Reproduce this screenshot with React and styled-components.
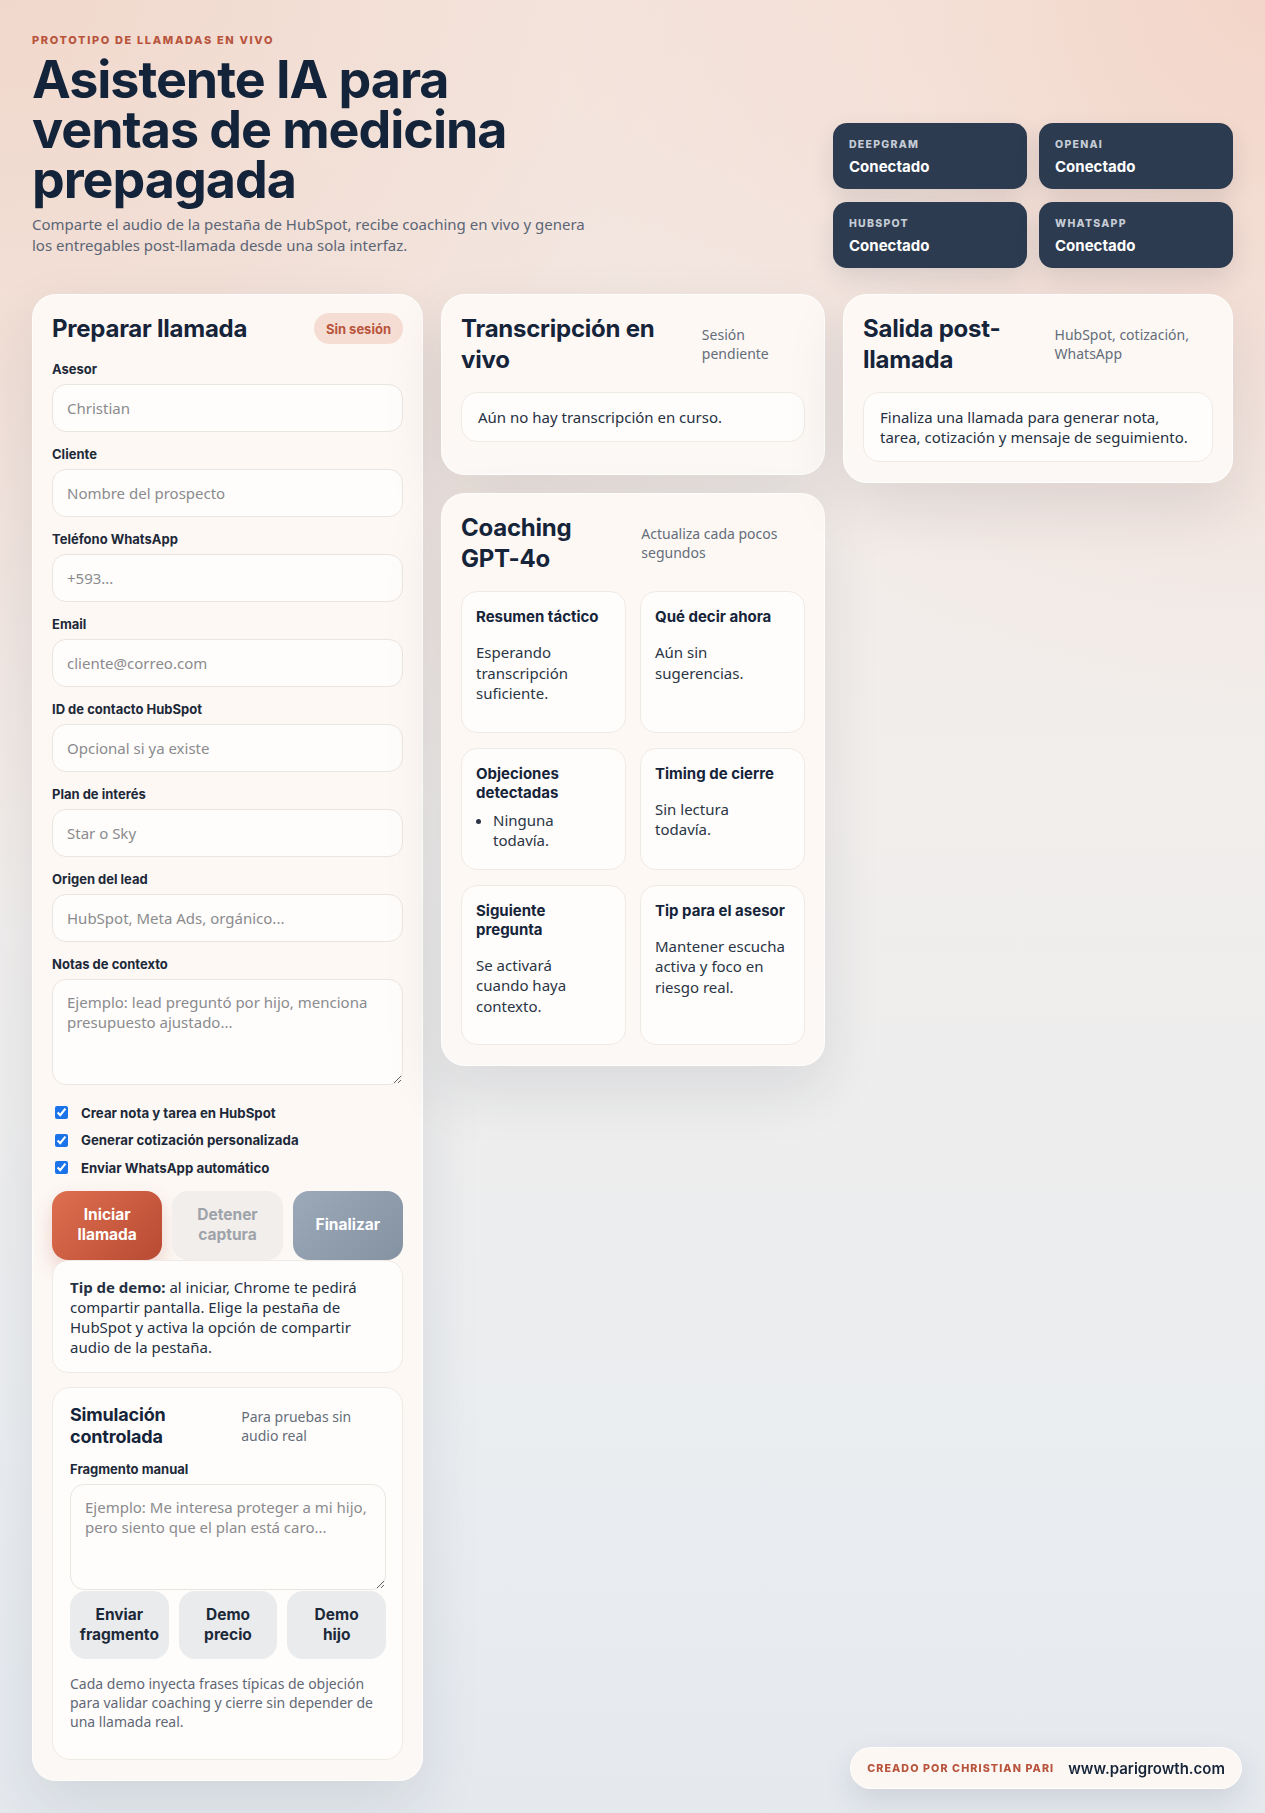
import React from "react";
import styled, { createGlobalStyle } from "styled-components";

const headingFont = `"Inter", "Liberation Sans", sans-serif`;
const bodyFont = `"Noto Sans", "Liberation Sans", sans-serif`;

const GlobalStyle = createGlobalStyle`
  * {
    box-sizing: border-box;
  }
  html,
  body {
    margin: 0;
    min-height: 100%;
  }
  body {
    font-family: ${bodyFont};
    color: #1d2939;
    background:
      radial-gradient(circle at 0% 0%, rgba(238, 200, 182, 0.55), transparent 42%),
      radial-gradient(circle at 100% 0%, rgba(242, 204, 188, 0.7), transparent 32%),
      linear-gradient(180deg, #f5ebe6 0%, #f1eeec 45%, #eaedf0 80%, #e5e9ee 100%);
    min-height: 1813px;
  }
`;

const Page = styled.main`
  padding: 33px 32px 40px;
`;

const Hero = styled.header`
  display: flex;
  justify-content: space-between;
  align-items: flex-end;
  gap: 24px;
  margin-bottom: 26px;
`;

const HeroText = styled.div`
  max-width: 565px;
  padding-bottom: 12px;
`;

const Eyebrow = styled.p`
  margin: 0 0 8px;
  font-family: ${headingFont};
  font-size: 11px;
  line-height: 14px;
  font-weight: 800;
  letter-spacing: 0.15em;
  text-transform: uppercase;
  color: #b8543c;
`;

const Title = styled.h1`
  margin: 0 0 9px;
  font-family: ${headingFont};
  font-size: 52px;
  line-height: 50px;
  font-weight: 700;
  letter-spacing: -0.02em;
  color: #13233a;
`;

const Lead = styled.p`
  margin: 0;
  font-size: 15px;
  line-height: 21px;
  color: #5b6575;
`;

const StatusGrid = styled.div`
  display: grid;
  grid-template-columns: repeat(2, 194px);
  gap: 13px 12px;
`;

const StatusCard = styled.div`
  background: #2c3b4f;
  border-radius: 14px;
  padding: 15px 16px 12px;
  box-shadow: 0 10px 24px rgba(30, 41, 59, 0.12);
`;

const StatusLabel = styled.div`
  font-family: ${headingFont};
  font-size: 10.5px;
  line-height: 14px;
  font-weight: 800;
  letter-spacing: 0.12em;
  color: #c5ccd6;
`;

const StatusValue = styled.div`
  margin-top: 5px;
  font-family: ${headingFont};
  font-size: 15px;
  line-height: 20px;
  font-weight: 700;
  color: #ffffff;
`;

const Board = styled.div`
  display: grid;
  grid-template-columns: 391px 1fr 390px;
  gap: 18px;
  align-items: start;
`;

const Stack = styled.div`
  display: flex;
  flex-direction: column;
  gap: 18px;
`;

const Card = styled.section`
  background: linear-gradient(180deg, #fdf8f4 0%, #fcf8f5 100%);
  border: 1px solid rgba(255, 255, 255, 0.8);
  border-radius: 24px;
  padding: 18px 19px 20px;
  box-shadow: 0 24px 60px rgba(31, 41, 55, 0.1);
`;

const CardHeader = styled.div`
  display: flex;
  justify-content: space-between;
  align-items: center;
  gap: 16px;
  margin-bottom: ${({ $tight }) => ($tight ? "13px" : "17px")};
`;

const CardTitle = styled.h2`
  margin: 0;
  font-family: ${headingFont};
  font-size: ${({ $small }) => ($small ? "18px" : "24px")};
  line-height: ${({ $small }) => ($small ? "22px" : "31px")};
  font-weight: 700;
  letter-spacing: -0.01em;
  color: #16243a;
`;

const Aside = styled.span`
  font-size: 14px;
  line-height: 19px;
  color: #646d7a;
`;

const Pill = styled.span`
  flex-shrink: 0;
  display: inline-flex;
  align-items: center;
  height: 31px;
  padding: 0 12px;
  border-radius: 999px;
  background: #f6ddd3;
  font-family: ${headingFont};
  font-size: 13px;
  font-weight: 700;
  color: #b8543c;
`;

const Form = styled.div`
  display: flex;
  flex-direction: column;
  gap: 14px;
`;

const Field = styled.label`
  display: flex;
  flex-direction: column;
  gap: 6px;
`;

const FieldLabel = styled.span`
  font-family: ${headingFont};
  font-size: 13px;
  line-height: 17px;
  font-weight: 700;
  color: #1d2939;
`;

const Input = styled.input`
  height: 48px;
  width: 100%;
  padding: 0 14px;
  border: 1px solid #ebe5e0;
  border-radius: 14px;
  background: #fffdfb;
  font-family: ${bodyFont};
  font-size: 15px;
  color: #1d2939;
  outline: none;

  &::placeholder {
    color: #8a8b8e;
  }
`;

const TextArea = styled.textarea`
  display: block;
  width: 100%;
  height: 106px;
  padding: 12px 14px;
  border: 1px solid #ebe5e0;
  border-radius: 14px;
  background: #fffdfb;
  font-family: ${bodyFont};
  font-size: 15px;
  line-height: 20px;
  color: #1d2939;
  outline: none;

  &::placeholder {
    color: #8a8b8e;
  }
`;

const CheckList = styled.div`
  display: flex;
  flex-direction: column;
  gap: 10px;
  padding: 5px 0 0 3px;
`;

const CheckRow = styled.label`
  display: flex;
  align-items: center;
  gap: 13px;
  height: 17.5px;
  font-family: ${headingFont};
  font-size: 13.25px;
  font-weight: 700;
  color: #1d2939;

  input {
    margin: 0;
    width: 13px;
    height: 13px;
    accent-color: #1a73e8;
  }
`;

const ActionGroup = styled.div`
  display: flex;
  flex-direction: column;
`;

const Actions = styled.div`
  display: grid;
  grid-template-columns: repeat(3, 1fr);
  gap: 10px;
`;

const tones = {
  primary: `
    background: linear-gradient(135deg, #de6f4f 0%, #b84a33 100%);
    color: #ffffff;
    box-shadow: 0 10px 20px rgba(184, 74, 51, 0.22);
  `,
  muted: `
    background: #f2eeeb;
    color: #9ea3aa;
  `,
  slate: `
    background: linear-gradient(135deg, #9ba9b9 0%, #8592a2 100%);
    color: #ffffff;
  `,
  soft: `
    background: #e9ebec;
    color: #1d2939;
  `,
};

const Button = styled.button`
  min-height: ${({ $h }) => $h || "69px"};
  padding: 12px 6px;
  border: none;
  border-radius: 16px;
  font-family: ${headingFont};
  font-size: 15.5px;
  line-height: 20px;
  font-weight: 700;
  ${({ $tone }) => tones[$tone]}
`;

const Box = styled.div`
  background: #fffdfb;
  border: 1px solid #f0eae5;
  border-radius: ${({ $r }) => $r || "16px"};
  padding: ${({ $pad }) => $pad || "14px 16px"};
  font-size: 15px;
  line-height: 20px;
  color: #253143;
`;

const Feed = styled.div`
  min-height: 62px;
`;

const TileGrid = styled.div`
  display: grid;
  grid-template-columns: 1fr 1fr;
  gap: 15px 14px;
`;

const Tile = styled.div`
  background: #fffdfb;
  border: 1px solid #f0eae5;
  border-radius: 16px;
  padding: 15px 17px 16px 14px;
`;

const TileTitle = styled.h3`
  margin: 0 0 8px;
  font-family: ${headingFont};
  font-size: 15px;
  line-height: 19px;
  font-weight: 700;
  color: #16243a;
`;

const TileText = styled.p`
  margin: 16px 0 12px;
  font-size: 15px;
  line-height: 20.5px;
  color: #2a3545;
`;

const TileList = styled.ul`
  margin: 8px 0 2px;
  padding-left: 17px;
  font-size: 15px;
  line-height: 20.5px;
  color: #2a3545;
`;

const SimButtons = styled.div`
  display: grid;
  grid-template-columns: repeat(3, 1fr);
  gap: 10px;
  margin-top: 1px;
`;

const Note = styled.p`
  margin: 15px 0 12px;
  font-size: 14px;
  line-height: 19px;
  color: #5f6876;
`;

const Credit = styled.footer`
  position: fixed;
  right: 23px;
  bottom: 24px;
  display: flex;
  align-items: center;
  gap: 14px;
  height: 42px;
  padding: 0 16px;
  border-radius: 999px;
  background: #fcf7f3;
  border: 1px solid rgba(255, 255, 255, 0.8);
  box-shadow: 0 12px 30px rgba(31, 41, 55, 0.12);
`;

const CreditBy = styled.span`
  font-family: ${headingFont};
  font-size: 10.75px;
  font-weight: 800;
  letter-spacing: 0.1em;
  color: #b8543c;
`;

const CreditLink = styled.span`
  font-family: ${headingFont};
  font-size: 15px;
  font-weight: 600;
  color: #16243a;
`;

const statuses = ["Deepgram", "OpenAI", "HubSpot", "WhatsApp"];

const fields = [
  { label: "Asesor", placeholder: "Christian" },
  { label: "Cliente", placeholder: "Nombre del prospecto" },
  { label: "Teléfono WhatsApp", placeholder: "+593..." },
  { label: "Email", placeholder: "cliente@correo.com" },
  { label: "ID de contacto HubSpot", placeholder: "Opcional si ya existe" },
  { label: "Plan de interés", placeholder: "Star o Sky" },
  { label: "Origen del lead", placeholder: "HubSpot, Meta Ads, orgánico..." },
];

const options = [
  "Crear nota y tarea en HubSpot",
  "Generar cotización personalizada",
  "Enviar WhatsApp automático",
];

const tiles = [
  { title: "Resumen táctico", text: "Esperando transcripción suficiente." },
  { title: "Qué decir ahora", text: "Aún sin sugerencias." },
  { title: "Objeciones detectadas", list: ["Ninguna todavía."] },
  { title: "Timing de cierre", text: "Sin lectura todavía." },
  { title: "Siguiente pregunta", text: "Se activará cuando haya contexto." },
  { title: "Tip para el asesor", text: "Mantener escucha activa y foco en riesgo real." },
];

export default function App() {
  return (
    <>
      <GlobalStyle />
      <Page>
        <Hero>
          <HeroText>
            <Eyebrow>Prototipo de llamadas en vivo</Eyebrow>
            <Title>
              Asistente IA para
              <br />
              ventas de medicina
              <br />
              prepagada
            </Title>
            <Lead>
              Comparte el audio de la pestaña de HubSpot, recibe coaching en vivo y genera
              los entregables post-llamada desde una sola interfaz.
            </Lead>
          </HeroText>
          <StatusGrid>
            {statuses.map((name) => (
              <StatusCard key={name}>
                <StatusLabel>{name.toUpperCase()}</StatusLabel>
                <StatusValue>Conectado</StatusValue>
              </StatusCard>
            ))}
          </StatusGrid>
        </Hero>

        <Board>
          <Card>
            <CardHeader>
              <CardTitle>Preparar llamada</CardTitle>
              <Pill>Sin sesión</Pill>
            </CardHeader>
            <Form>
              {fields.map((f) => (
                <Field key={f.label}>
                  <FieldLabel>{f.label}</FieldLabel>
                  <Input placeholder={f.placeholder} />
                </Field>
              ))}
              <Field>
                <FieldLabel>Notas de contexto</FieldLabel>
                <TextArea placeholder="Ejemplo: lead preguntó por hijo, menciona presupuesto ajustado..." />
              </Field>
              <CheckList>
                {options.map((o) => (
                  <CheckRow key={o}>
                    <input type="checkbox" defaultChecked />
                    {o}
                  </CheckRow>
                ))}
              </CheckList>
              <ActionGroup>
                <Actions>
                  <Button $tone="primary">
                    Iniciar
                    <br />
                    llamada
                  </Button>
                  <Button $tone="muted">
                    Detener
                    <br />
                    captura
                  </Button>
                  <Button $tone="slate">Finalizar</Button>
                </Actions>
                <Box $pad="16px 17px 15px">
                  <strong>Tip de demo:</strong> al iniciar, Chrome te pedirá compartir pantalla.
                  Elige la pestaña de HubSpot y activa la opción de compartir audio de la
                  pestaña.
                </Box>
              </ActionGroup>
              <Box $r="18px" $pad="16px 16px 16px 17px">
                <CardHeader $tight>
                  <CardTitle $small>Simulación controlada</CardTitle>
                  <Aside>Para pruebas sin audio real</Aside>
                </CardHeader>
                <Field>
                  <FieldLabel>Fragmento manual</FieldLabel>
                  <TextArea placeholder="Ejemplo: Me interesa proteger a mi hijo, pero siento que el plan está caro..." />
                </Field>
                <SimButtons>
                  <Button $tone="soft" $h="68px">
                    Enviar
                    <br />
                    fragmento
                  </Button>
                  <Button $tone="soft" $h="68px">
                    Demo
                    <br />
                    precio
                  </Button>
                  <Button $tone="soft" $h="68px">
                    Demo
                    <br />
                    hijo
                  </Button>
                </SimButtons>
                <Note>
                  Cada demo inyecta frases típicas de objeción para validar coaching y cierre
                  sin depender de una llamada real.
                </Note>
              </Box>
            </Form>
          </Card>

          <Stack>
            <Card>
              <CardHeader>
                <CardTitle>Transcripción en vivo</CardTitle>
                <Aside>Sesión pendiente</Aside>
              </CardHeader>
              <Feed>
                <Box>Aún no hay transcripción en curso.</Box>
              </Feed>
            </Card>
            <Card>
              <CardHeader>
                <CardTitle>Coaching GPT-4o</CardTitle>
                <Aside>Actualiza cada pocos segundos</Aside>
              </CardHeader>
              <TileGrid>
                {tiles.map((t) => (
                  <Tile key={t.title}>
                    <TileTitle>{t.title}</TileTitle>
                    {t.list ? (
                      <TileList>
                        {t.list.map((item) => (
                          <li key={item}>{item}</li>
                        ))}
                      </TileList>
                    ) : (
                      <TileText>{t.text}</TileText>
                    )}
                  </Tile>
                ))}
              </TileGrid>
            </Card>
          </Stack>

          <Card>
            <CardHeader>
              <CardTitle>Salida post-llamada</CardTitle>
              <Aside>HubSpot, cotización, WhatsApp</Aside>
            </CardHeader>
            <Box>
              Finaliza una llamada para generar nota, tarea, cotización y mensaje de
              seguimiento.
            </Box>
          </Card>
        </Board>
      </Page>

      <Credit>
        <CreditBy>CREADO POR CHRISTIAN PARI</CreditBy>
        <CreditLink>www.parigrowth.com</CreditLink>
      </Credit>
    </>
  );
}
